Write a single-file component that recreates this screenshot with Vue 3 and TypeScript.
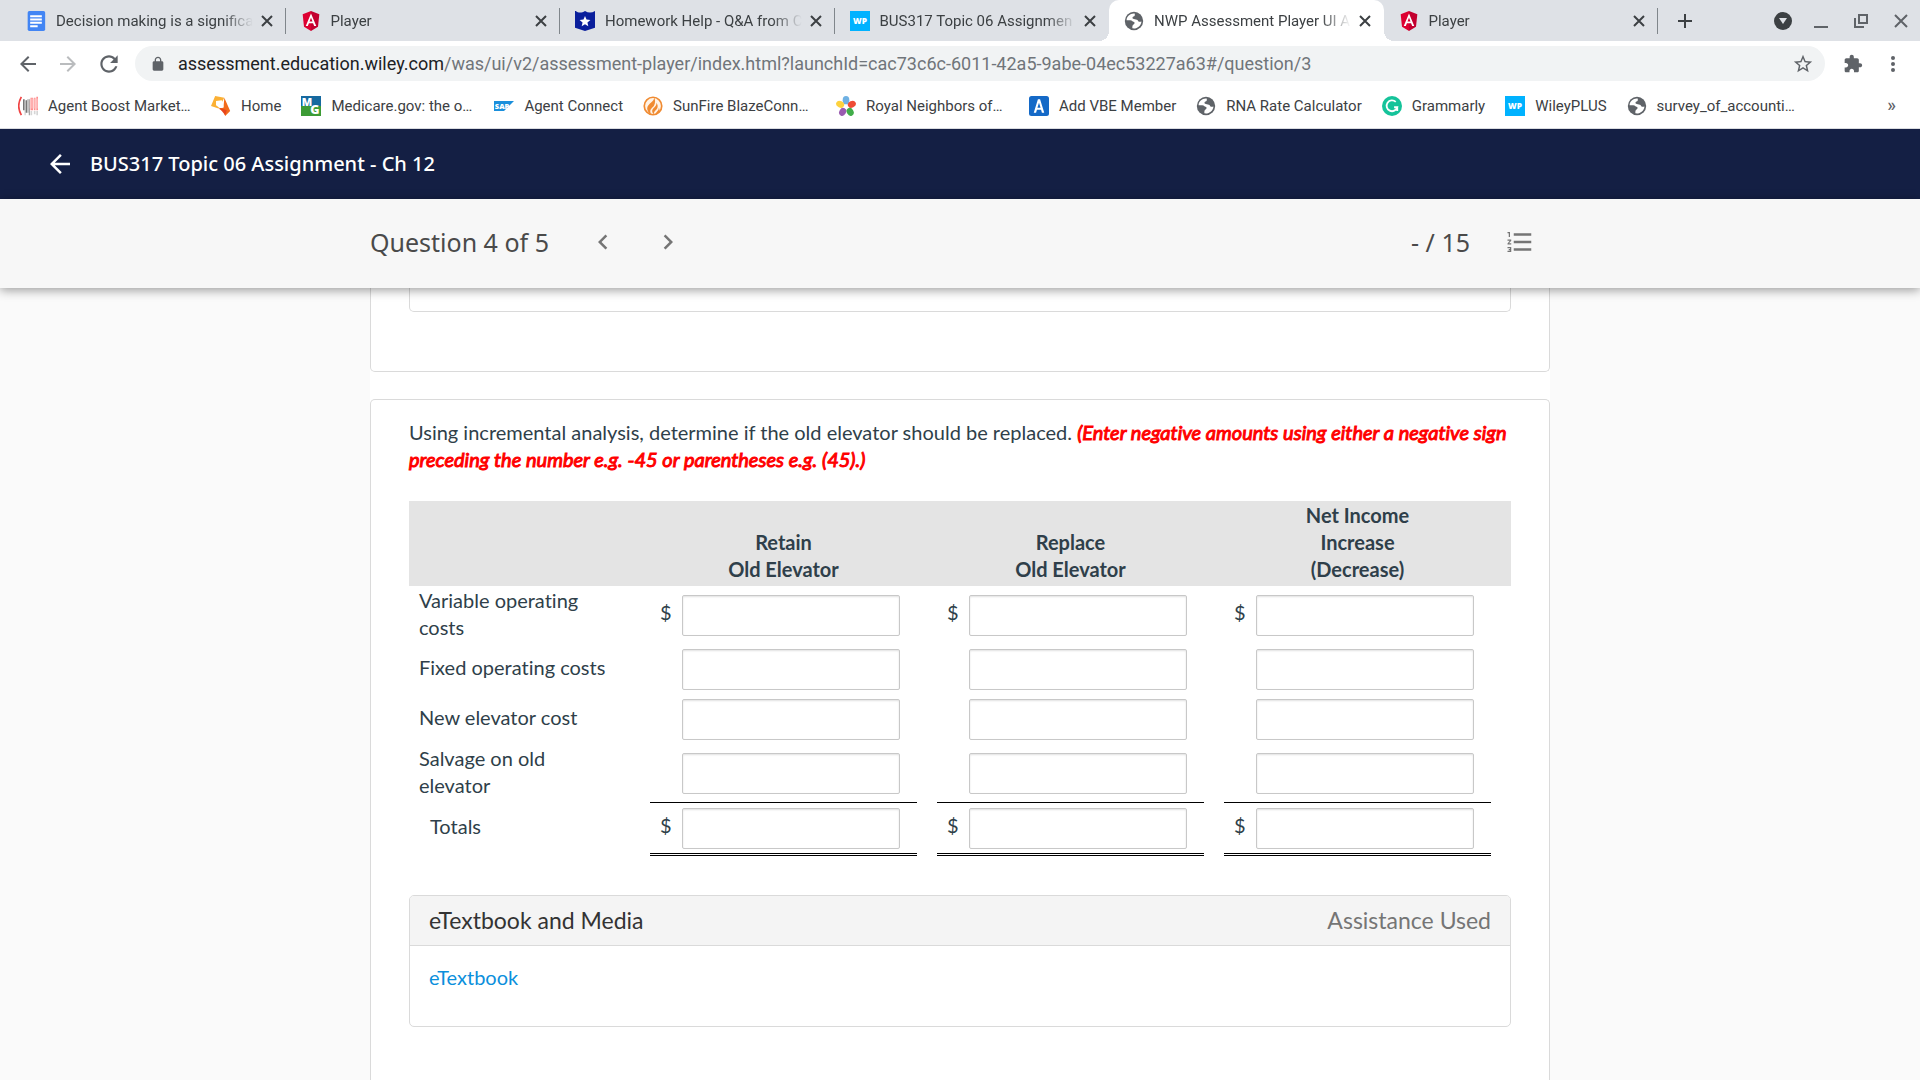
<script setup lang="ts">
import { reactive } from 'vue'

interface Tab {
  title: string
  icon: string
  active?: boolean
}

interface Bookmark {
  title: string
  icon: string
  clipped?: boolean
}

interface CostRow {
  key: string
  label: string
  currency?: boolean
  kind: 'single' | 'double' | 'subtotal' | 'total'
}

const angular =
  '<path fill="#dd0031" d="M12 0 2 4l1.600 15L12 24z"/><path fill="#c3002f" d="M12 0l10 4-1.600 15L12 24z"/><path fill="#fff" d="M12 3 5.700 18h2.500l1.300-3.300h5L15.800 18h2.500zm0 5.200 1.800 4.400h-3.600z"/>'
const globe =
  '<circle cx="12" cy="12" r="11" fill="#5f6368"/><path fill="#fff" d="M13 3.200C7.500 2.600 3.300 6.500 3.100 11c2.400 0 4.200-.2 5.900.4 1.300.6 1 1.300 2.400 1.600 1.800.4 1.600 1.800.5 2.800-1.500 1-2 1.600-1.900 5 5.500 1 10.700-3 10.900-8.300-1.800.8-3 .6-4-.6-.8-1.500-2-1.700-3.900-1.900-1.600-.2-2.800-.6-2.800-1.800 0-1.300 1-1.500 2-2 1.200-.6.600-1.800.8-3z"/>'
const wiley =
  '<path fill="#00b2ff" d="M0 0h24v24H0z"/><text x="12" y="16" text-anchor="middle" font-family="Open Sans, sans-serif" font-weight="800" font-size="10" fill="#fff">WP</text>'

const icons: Record<string, string> = {
  angular,
  globe,
  wiley,
  docs:
    '<rect x="2" width="21" height="24" rx="2" fill="#4285f4"/><path fill="#fff" d="M5 5h14v2.400H5zm0 4h14v2.400H5zm0 4h14v2.400H5zm0 4h9v2.400H5z"/>',
  hero:
    '<path fill="#0a1f9c" d="M1 0c3 2.500 7 2.500 11 0 4 2.500 8 2.500 12 0v20l-12 4-12-4V0z"/><path fill="#fff" d="m12 6 1.800 4.300 4.700.4-3.600 3 1.100 4.600-4-2.400-4 2.400 1.100-4.600-3.600-3 4.700-.4z"/>',
  boost:
    '<path d="M4 1C0 8 0 16 4 23" fill="none" stroke="#f04444" stroke-width="2"/><path fill="#777" d="M6 4h2v13H6zm3 1h2v15H9zm4-1h1v19h-1z"/><path fill="#bbb" d="M8 6h1v17H8zm3-2h2v16h-2z"/><path fill="#ff8d8d" d="M15 2h3v15h-3zm4 0h2v15h-2zm3-1h2v16h-2z"/><path fill="#ffc4c4" d="M14 3h10v12H14z" opacity=".6"/><path fill="#d5d5d5" d="M15 18h2v5h-2zm4 0h2v4h-2zm3 0h2v5h-2z"/>',
  home:
    '<path fill="#fbb034" d="m5 0 11 2-7 13-9-3z"/><path fill="#f26a1b" d="m16 2 7 16-6 6-2-5-6-4 6-1z"/><path fill="#fff" d="m6 6 7-1 2 8-5 1-4-3z"/><path fill="#e8451c" d="m10 14 9 3-2 6z"/>',
  medicare:
    '<path fill="#16699f" d="M0 0h24v12H0z"/><path fill="#3c9b35" d="M0 12h24v12H0z"/><text x="1" y="12" font-family="Open Sans, sans-serif" font-weight="800" font-size="13" fill="#fff">M</text><text x="11" y="22" font-family="Open Sans, sans-serif" font-weight="800" font-size="15" fill="#fff">G</text>',
  sap:
    '<path fill="#1a8fdc" d="M0 6h24L12 18H0z"/><text x="1" y="15" font-family="Open Sans, sans-serif" font-weight="800" font-size="9" fill="#fff">SAP</text>',
  sunfire:
    '<circle cx="12" cy="12" r="10.500" fill="#fff3e6" stroke="#f08b32" stroke-width="2"/><path fill="#f08b32" d="M13 1c2 6-8 8-8 14 0 3 2 6 5 7-3-5 0-7 3-10 2-3 2-8 0-11zm3 7c1 5-5 6-5 10 0 2 1 3 2 4 0-4 3-5 4-7s1-5-1-7zm3 6c0 4-3 4-4 8 4-1 6-5 4-8z"/>',
  flower:
    '<ellipse cx="12" cy="5" rx="4" ry="5" fill="#6fb1e3"/><ellipse cx="5" cy="10" rx="5" ry="4" fill="#fdd23e" transform="rotate(25 5 10)"/><ellipse cx="19" cy="10" rx="5" ry="4" fill="#ef4b35" transform="rotate(-25 19 10)"/><ellipse cx="8" cy="19" rx="4" ry="5" fill="#9a5bb0" transform="rotate(30 8 19)"/><ellipse cx="17" cy="19" rx="4" ry="5" fill="#41ad49" transform="rotate(-30 17 19)"/><circle cx="12" cy="13" r="2" fill="#fff"/>',
  vbe:
    '<rect width="24" height="24" rx="3" fill="#1469c7"/><path fill="#fff" d="M10.700 4h2.600l5 16h-2.800l-1-3.500h-5l-1 3.500H5.700zM12 8l-1.900 6.200h3.800z"/>',
  grammarly:
    '<circle cx="12" cy="12" r="12" fill="#15c39a"/><path d="M16.500 7A6.500 6.500 0 1 0 18.300 13.500H14.500M18.300 13v5" fill="none" stroke="#fff" stroke-width="2.200"/>',
}

const tabs: Tab[] = [
  { title: 'Decision making is a significa', icon: 'docs' },
  { title: 'Player', icon: 'angular' },
  { title: 'Homework Help - Q&A from C', icon: 'hero' },
  { title: 'BUS317 Topic 06 Assignmen', icon: 'wiley' },
  { title: 'NWP Assessment Player UI A', icon: 'globe', active: true },
  { title: 'Player', icon: 'angular' },
]

const bookmarks: Bookmark[] = [
  { title: 'Agent Boost Market…', icon: 'boost', clipped: true },
  { title: 'Home', icon: 'home' },
  { title: 'Medicare.gov: the o…', icon: 'medicare', clipped: true },
  { title: 'Agent Connect', icon: 'sap' },
  { title: 'SunFire BlazeConn…', icon: 'sunfire', clipped: true },
  { title: 'Royal Neighbors of…', icon: 'flower', clipped: true },
  { title: 'Add VBE Member', icon: 'vbe' },
  { title: 'RNA Rate Calculator', icon: 'globe' },
  { title: 'Grammarly', icon: 'grammarly' },
  { title: 'WileyPLUS', icon: 'wiley' },
  { title: 'survey_of_accounti…', icon: 'globe', clipped: true },
]

const columns = [
  { key: 'retain', lines: ['Retain', 'Old Elevator'] },
  { key: 'replace', lines: ['Replace', 'Old Elevator'] },
  { key: 'net', lines: ['Net Income', 'Increase', '(Decrease)'] },
]

const rows: CostRow[] = [
  { key: 'variable', label: 'Variable operating costs', currency: true, kind: 'double' },
  { key: 'fixed', label: 'Fixed operating costs', kind: 'single' },
  { key: 'new', label: 'New elevator cost', kind: 'single' },
  { key: 'salvage', label: 'Salvage on old elevator', kind: 'subtotal' },
  { key: 'totals', label: 'Totals', currency: true, kind: 'total' },
]

const answers = reactive<Record<string, string>>({})
</script>

<template>
  <div class="window">
    <header class="browser">
      <div class="strip">
        <div class="tabs" role="tablist">
          <div
            v-for="(tab, i) in tabs"
            :key="i"
            class="tab"
            :class="{ active: tab.active, plain: i === 3 }"
            role="tab"
            :aria-selected="!!tab.active"
          >
            <svg class="favicon" viewBox="0 0 24 24" v-html="icons[tab.icon]" />
            <span class="tab-title">{{ tab.title }}</span>
            <button class="tab-close" aria-label="Close tab">
              <svg width="12" height="12" viewBox="0 0 12 12">
                <path d="M1 1l10 10M11 1L1 11" stroke="#3c4043" stroke-width="2" />
              </svg>
            </button>
          </div>
        </div>
        <div class="strip-end">
          <button class="icon-button" aria-label="New tab">
            <svg width="16" height="16" viewBox="0 0 16 16">
              <path d="M8 1v14M1 8h14" stroke="#3c4043" stroke-width="2" />
            </svg>
          </button>
          <div class="window-controls">
            <button class="icon-button" aria-label="Search tabs">
              <svg width="18" height="18" viewBox="0 0 18 18">
                <circle cx="9" cy="9" r="9" fill="#3c4043" />
                <path d="M5 6h8l-4 6z" fill="#dee1e6" />
              </svg>
            </button>
            <button class="icon-button" aria-label="Minimize">
              <svg width="14" height="14" viewBox="0 0 14 14">
                <path d="M0 13h14" stroke="#5f6368" stroke-width="2" />
              </svg>
            </button>
            <button class="icon-button" aria-label="Restore">
              <svg width="14" height="14" viewBox="0 0 14 14" fill="none" stroke="#5f6368" stroke-width="2">
                <path d="M5 1h8v8H5zM1 4v9h9" />
              </svg>
            </button>
            <button class="icon-button" aria-label="Close window">
              <svg width="14" height="14" viewBox="0 0 14 14">
                <path d="M1 1l12 12M13 1L1 13" stroke="#5f6368" stroke-width="2" />
              </svg>
            </button>
          </div>
        </div>
      </div>

      <div class="toolbar">
        <div class="nav">
          <button class="icon-button" aria-label="Back">
            <svg width="24" height="24" viewBox="0 0 24 24" fill="#5f6368">
              <path d="M20 11H7.830l5.590-5.590L12 4l-8 8 8 8 1.410-1.410L7.830 13H20v-2z" />
            </svg>
          </button>
          <button class="icon-button" aria-label="Forward">
            <svg width="24" height="24" viewBox="0 0 24 24" fill="#babcbe">
              <path d="M12 4l-1.410 1.410L16.170 11H4v2h12.170l-5.580 5.590L12 20l8-8z" />
            </svg>
          </button>
          <button class="icon-button" aria-label="Reload">
            <svg width="26" height="26" viewBox="0 0 24 24" fill="#5f6368">
              <path
                d="M17.650 6.350C16.200 4.900 14.210 4 12 4c-4.420 0-7.990 3.580-7.990 8s3.570 8 7.990 8c3.730 0 6.840-2.550 7.730-6h-2.080c-.82 2.330-3.040 4-5.650 4-3.310 0-6-2.690-6-6s2.690-6 6-6c1.660 0 3.140.69 4.220 1.780L13 11h7V4l-2.350 2.350z"
              />
            </svg>
          </button>
        </div>
        <div class="omnibox">
          <svg width="16" height="16" viewBox="0 0 24 24" fill="#5f6368">
            <path
              d="M18 8h-1V6c0-2.760-2.240-5-5-5S7 3.240 7 6v2H6c-1.100 0-2 .9-2 2v10c0 1.100.9 2 2 2h12c1.100 0 2-.9 2-2V10c0-1.100-.9-2-2-2zM9 8V6c0-1.660 1.340-3 3-3s3 1.340 3 3v2z"
            />
          </svg>
          <div class="address" role="textbox" aria-label="Address" tabindex="0">
            <span class="host">assessment.education.wiley.com</span>/was/ui/v2/assessment-player/index.html?launchId=cac73c6c-6011-42a5-9abe-04ec53227a63#/question/3
          </div>
          <button class="icon-button" aria-label="Bookmark this page">
            <svg width="22" height="22" viewBox="0 0 24 24" fill="#5f6368">
              <path
                d="M22 9.240l-7.190-.62L12 2 9.190 8.630 2 9.240l5.460 4.730L5.820 21 12 17.270 18.180 21l-1.630-7.030L22 9.240zM12 15.400l-3.760 2.270 1-4.280-3.320-2.880 4.380-.38L12 6.100l1.710 4.040 4.380.38-3.320 2.880 1 4.280L12 15.400z"
              />
            </svg>
          </button>
        </div>
        <div class="menu">
          <button class="icon-button" aria-label="Extensions">
            <svg width="20" height="20" viewBox="0 0 24 24" fill="#5f6368">
              <path
                d="M20.500 11H19V7c0-1.100-.9-2-2-2h-4V3.500C13 2.120 11.880 1 10.500 1S8 2.120 8 3.500V5H4c-1.100 0-1.990.9-1.990 2v3.800H3.500c1.490 0 2.700 1.210 2.700 2.700s-1.210 2.700-2.700 2.700H2V20c0 1.100.9 2 2 2h3.800v-1.500c0-1.490 1.210-2.700 2.700-2.700 1.490 0 2.700 1.210 2.700 2.700V22H17c1.100 0 2-.9 2-2v-4h1.500c1.380 0 2.500-1.120 2.500-2.500S21.880 11 20.500 11z"
              />
            </svg>
          </button>
          <button class="icon-button" aria-label="Menu">
            <svg width="4" height="18" viewBox="0 0 4 18" fill="#5f6368">
              <circle cx="2" cy="3" r="2" />
              <circle cx="2" cy="9" r="2" />
              <circle cx="2" cy="15" r="2" />
            </svg>
          </button>
        </div>
      </div>

      <nav class="bookmarks" aria-label="Bookmarks">
        <a v-for="mark in bookmarks" :key="mark.title" class="bookmark" href="#">
          <svg class="favicon" viewBox="0 0 24 24" v-html="icons[mark.icon]" />
          <span :class="{ clipped: mark.clipped }">{{ mark.title }}</span>
        </a>
        <button class="more" aria-label="More bookmarks">»</button>
      </nav>
    </header>

    <div class="course-bar">
      <button class="icon-button" aria-label="Back to course">
        <svg width="30" height="30" viewBox="0 0 24 24" fill="#fff">
          <path d="M20 11H7.830l5.590-5.590L12 4l-8 8 8 8 1.410-1.410L7.830 13H20v-2z" />
        </svg>
      </button>
      <h1>BUS317 Topic 06 Assignment - Ch 12</h1>
    </div>

    <div class="question-bar">
      <div class="question-inner">
        <h2>Question 4 of 5</h2>
        <button class="icon-button prev" aria-label="Previous question">
          <svg width="30" height="30" viewBox="0 0 24 24" fill="#757575">
            <path d="M15.410 7.410L14 6l-6 6 6 6 1.410-1.410L10.830 12z" />
          </svg>
        </button>
        <button class="icon-button next" aria-label="Next question">
          <svg width="30" height="30" viewBox="0 0 24 24" fill="#757575">
            <path d="M10 6L8.590 7.410 13.170 12l-4.580 4.590L10 18l6-6z" />
          </svg>
        </button>
        <span class="score">- / 15</span>
        <button class="icon-button" aria-label="Question list">
          <svg width="30" height="30" viewBox="0 0 24 24" fill="#757575">
            <path
              d="M2 17h2v.5H3v1h1v.5H2v1h3v-4H2v1zm1-9h1V4H2v1h1v3zm-1 3h1.800L2 13.100v.9h3v-1H3.200L5 10.900V10H2v1zm5-6v2h14V5H7zm0 14h14v-2H7v2zm0-6h14v-2H7v2z"
            />
          </svg>
        </button>
      </div>
    </div>

    <main class="page">
      <section class="card previous">
        <div class="panel-tail"></div>
      </section>

      <section class="card current">
        <p class="prompt">
          Using incremental analysis, determine if the old elevator should be replaced.
          <em>(Enter negative amounts using either a negative sign preceding the number e.g. -45 or parentheses e.g. (45).)</em>
        </p>

        <table class="analysis">
          <thead>
            <tr>
              <td class="label"></td>
              <th v-for="col in columns" :key="col.key" scope="col">
                <span v-for="line in col.lines" :key="line">{{ line }}</span>
              </th>
            </tr>
          </thead>
          <tbody>
            <tr v-for="row in rows" :key="row.key" :class="row.kind">
              <th class="label" scope="row">{{ row.label }}</th>
              <td v-for="col in columns" :key="col.key">
                <div class="amount">
                  <span class="currency">{{ row.currency ? '$' : '' }}</span>
                  <input
                    v-model="answers[row.key + '-' + col.key]"
                    type="text"
                    :aria-label="row.label + ', ' + col.lines.join(' ')"
                  />
                </div>
              </td>
            </tr>
          </tbody>
        </table>

        <section class="media">
          <header>
            <h3>eTextbook and Media</h3>
            <span>Assistance Used</span>
          </header>
          <div class="media-body"><a href="#">eTextbook</a></div>
        </section>
      </section>
    </main>
  </div>
</template>

<style>
body {
  margin: 0;
  background: #fafafa;
}
</style>

<style scoped>
* {
  box-sizing: border-box;
}

.window {
  display: flex;
  flex-direction: column;
  height: 100vh;
  overflow: hidden;
  font-family: Lato, sans-serif;
}

button {
  padding: 0;
  border: 0;
  background: none;
  cursor: pointer;
}

.icon-button {
  display: flex;
  align-items: center;
  justify-content: center;
  flex: none;
}

svg {
  display: block;
  flex: none;
}

a {
  text-decoration: none;
}

/* Browser chrome */
.browser {
  flex: none;
  background: #fff;
  border-bottom: 1px solid #dadce0;
  font-family: Roboto, sans-serif;
  color: #3c4043;
}

.strip {
  display: flex;
  height: 41px;
  padding-left: 11px;
  background: #dee1e6;
}

.tabs {
  display: flex;
  flex: 1;
  min-width: 0;
}

.tab {
  position: relative;
  display: flex;
  flex: 1 1 0;
  align-items: center;
  min-width: 0;
  padding: 0 13px 0 15px;
  font-size: 15px;
}

.tab:not(.active):not(.plain)::after {
  content: '';
  position: absolute;
  top: 8px;
  right: 0;
  width: 1px;
  height: 26px;
  background: #80868b;
}

.tab.active {
  background: #fff;
  border-radius: 10px 10px 0 0;
}

.tab.active::before,
.tab.active::after {
  content: '';
  position: absolute;
  bottom: 0;
  width: 10px;
  height: 10px;
}

.tab.active::before {
  left: -10px;
  background: radial-gradient(circle at 0 0, transparent 10px, #fff 10px);
}

.tab.active::after {
  right: -10px;
  background: radial-gradient(circle at 100% 0, transparent 10px, #fff 10px);
}

.favicon {
  width: 20px;
  height: 20px;
}

.tab-title {
  flex: 1;
  min-width: 0;
  margin: 0 8px 0 10px;
  overflow: hidden;
  white-space: nowrap;
  mask-image: linear-gradient(to right, #000 calc(100% - 30px), transparent);
}

.strip-end {
  display: flex;
  flex: none;
  align-items: center;
  justify-content: space-between;
  width: 262px;
  padding: 0 12px 0 19px;
}

.window-controls {
  display: flex;
  align-items: center;
  gap: 26px;
}

.window-controls .icon-button:first-child {
  margin-right: -4px;
}

.toolbar {
  display: flex;
  align-items: center;
  padding: 5px 25px 0 16px;
}

.nav {
  display: flex;
  align-items: center;
  gap: 16px;
  width: 119px;
}

.omnibox {
  display: flex;
  flex: 1;
  align-items: center;
  gap: 12px;
  min-width: 0;
  height: 35px;
  padding: 0 11px 0 15px;
  border-radius: 18px;
  background: #f1f3f4;
}

.address {
  flex: 1;
  min-width: 0;
  overflow: hidden;
  white-space: nowrap;
  font-size: 18px;
  color: #70757a;
}

.host {
  color: #202124;
}

.menu {
  display: flex;
  align-items: center;
  gap: 28px;
  padding-left: 18px;
}

.bookmarks {
  display: flex;
  align-items: center;
  gap: 20px;
  height: 47px;
  padding: 3px 24px 0 18px;
}

.bookmark {
  display: flex;
  flex: none;
  align-items: center;
  gap: 10px;
  font-size: 15px;
  color: #3c4043;
}

.clipped {
  min-width: 143px;
}

.more {
  margin-left: auto;
  padding-bottom: 4px;
  font: 500 18px Roboto, sans-serif;
  color: #5f6368;
}

/* Course header */
.course-bar {
  display: flex;
  flex: none;
  align-items: center;
  gap: 15px;
  height: 70px;
  padding: 0 45px;
  background: #141f44;
}

.course-bar h1 {
  margin: 0;
  padding-bottom: 2px;
  font: 500 20px 'Noto Sans', sans-serif;
  color: #fff;
}

.question-bar {
  position: relative;
  flex: none;
  background: #f7f7f7;
  box-shadow: 0 2px 10px rgba(0, 0, 0, 0.4);
  font-family: 'Noto Sans', sans-serif;
  color: #4a4a4a;
}

.question-inner {
  display: flex;
  align-items: center;
  width: 1180px;
  max-width: 100%;
  height: 89px;
  margin: 0 auto;
  padding: 0 15px 3px 0;
}

.question-inner h2 {
  margin: 0;
  font-size: 25px;
  font-weight: 400;
}

.prev {
  margin-left: 39px;
}

.next {
  margin-left: 35px;
}

.score {
  margin-left: auto;
  margin-right: 35px;
  font-size: 25px;
}

/* Question content */
.page {
  display: flex;
  flex: 1;
  flex-direction: column;
  gap: 27px;
  width: 1180px;
  max-width: 100%;
  min-height: 0;
  margin: 0 auto;
  background: #fff;
  font-size: 20px;
  font-variant-ligatures: none;
  line-height: 27px;
  color: #2f3f4a;
}

.card {
  padding: 0 38px;
  border: 1px solid #dadada;
  background: #fff;
}

.previous {
  padding-bottom: 59px;
  border-top: 0;
  border-radius: 0 0 5px 5px;
}

.panel-tail {
  height: 24px;
  border: 1px solid #dadada;
  border-top: 0;
  border-radius: 0 0 5px 5px;
}

.current {
  flex: 1;
  padding-top: 19px;
  border-bottom: 0;
  border-radius: 5px 5px 0 0;
}

.prompt {
  margin: 0 0 28px;
}

/* The regular italic thickened by a stroke keeps its narrow set */
.prompt em {
  color: #f00;
  -webkit-text-stroke: 1px #f00;
}

.analysis {
  width: 100%;
  border-collapse: collapse;
  table-layout: fixed;
}

.analysis thead {
  background: #e4e4e4;
}

.analysis thead th {
  padding: 1px 20px 3px 0;
  vertical-align: bottom;
  font-weight: 700;
}

.analysis thead span {
  display: block;
}

.analysis td {
  padding: 0 20px 0 0;
  vertical-align: bottom;
}

.analysis .label {
  width: 241px;
  padding: 0 40px 3px 10px;
  font-weight: 400;
  text-align: left;
  vertical-align: middle;
}

.amount {
  display: flex;
  align-items: center;
  padding: 5px 17px 4px 10px;
}

.double .amount,
.subtotal .amount {
  padding-top: 9px;
  padding-bottom: 8px;
}

.subtotal .amount {
  border-bottom: 1px solid #000;
}

.total .amount {
  border-bottom: 3px double #000;
}

.analysis .total .label {
  padding-bottom: 6px;
  padding-left: 21px;
}

.currency {
  flex: none;
  width: 22px;
  padding-bottom: 6px;
}

.amount input {
  flex: 1;
  min-width: 0;
  height: 41px;
  padding: 0 10px;
  border: 1px solid #c8c8c8;
  border-radius: 2px;
  box-shadow: inset 0 1px 2px rgba(0, 0, 0, 0.12);
  background: #fff;
  font: 20px Lato, sans-serif;
}

.media {
  margin-top: 39px;
  border: 1px solid #dadada;
  border-radius: 5px;
  overflow: hidden;
}

.media header {
  display: flex;
  align-items: center;
  justify-content: space-between;
  height: 50px;
  padding: 0 19px;
  border-bottom: 1px solid #dadada;
  background: #f4f4f4;
  font-size: 23px;
  color: #757575;
}

.media h3 {
  margin: 0;
  font-size: 23px;
  font-weight: 400;
  color: #333;
}

.media-body {
  height: 80px;
  padding: 18px 19px;
}

.media-body a {
  color: #0b8fdc;
}
</style>
